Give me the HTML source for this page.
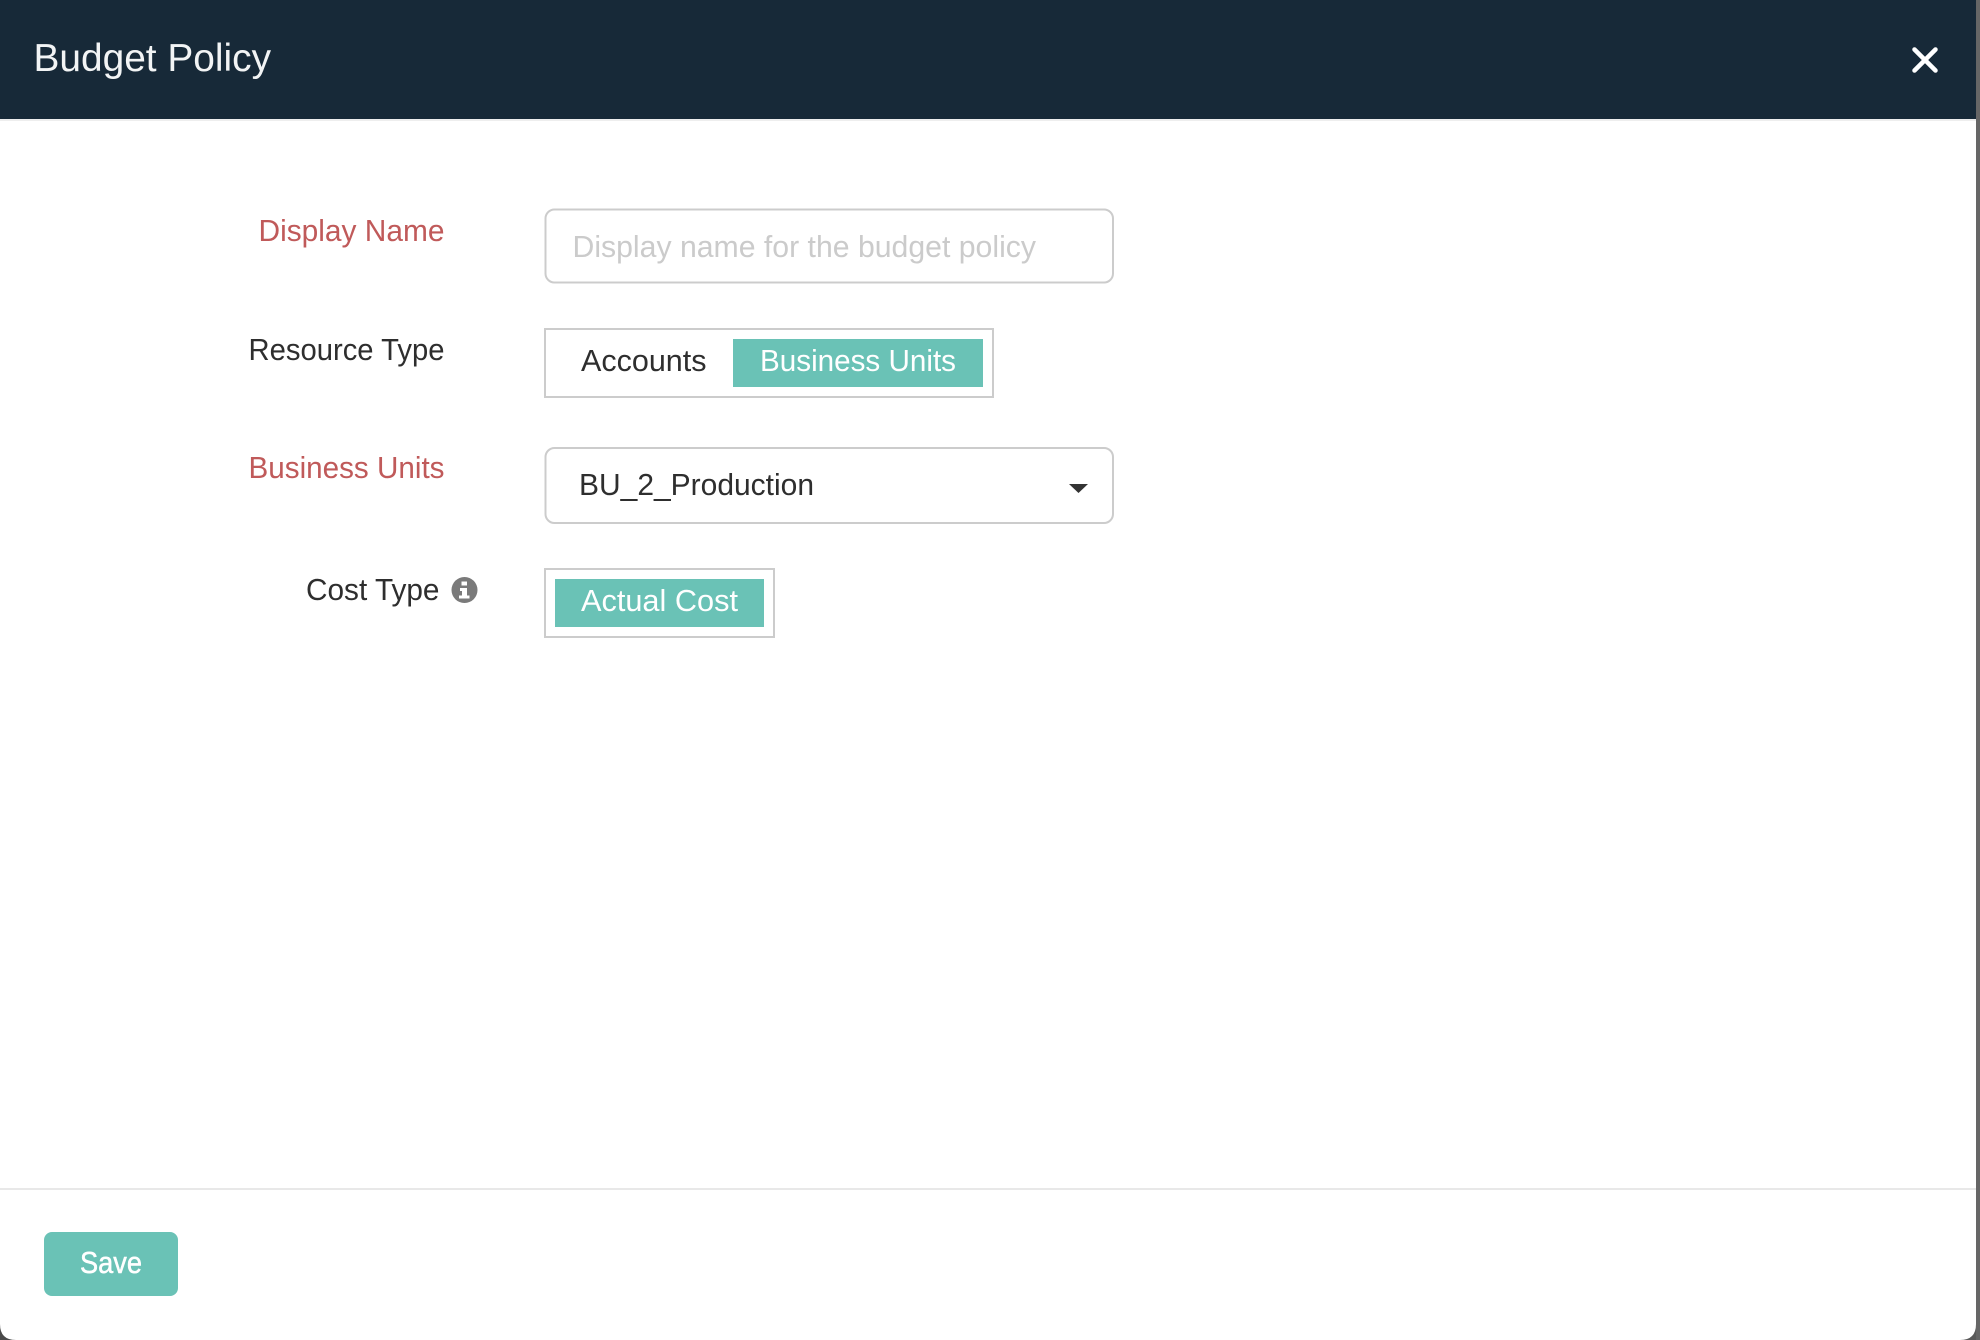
<!DOCTYPE html>
<html lang="en"><head><meta charset="utf-8"><title>Budget Policy</title>
<style>
html,body{margin:0;padding:0;background:#fff}
body{width:1980px;height:1340px;overflow:hidden;position:relative}
svg{position:absolute;left:0;top:0}
text{font-family:"Liberation Sans",sans-serif}
</style></head><body>
<svg width="1980" height="1340" viewBox="0 0 1980 1340" xmlns="http://www.w3.org/2000/svg">
<rect width="1980" height="1340" fill="#5a5a5a"/>
<rect x="0" y="0" width="1976" height="1340" fill="#fff"/>
<path d="M0 1324V1340H16Q0 1340 0 1324Z" fill="#4a4a4a"/>
<path d="M1976 1324V1340H1960Q1976 1340 1976 1324Z" fill="#5a5a5a"/>
<rect x="1976" y="0" width="4" height="1340" fill="#666"/>
<rect x="0" y="0" width="1976" height="119" fill="#172938"/>
<rect x="0" y="119" width="1976" height="2" fill="#eeeeee"/>
<text x="33.500" y="71" font-size="39" fill="#f2f4f5" textLength="237.500" lengthAdjust="spacingAndGlyphs">Budget Policy</text>
<path d="M1914.500 49.500L1935.500 70.500M1935.500 49.500L1914.500 70.500" stroke="#fff" stroke-width="4.500" stroke-linecap="round" fill="none"/>

<text x="258.500" y="241" font-size="31" fill="#c05a5a" textLength="186" lengthAdjust="spacingAndGlyphs">Display Name</text>
<rect x="545.500" y="209.500" width="567.500" height="73" rx="9" fill="#fff" stroke="#cccccc" stroke-width="2"/>
<text x="572.500" y="257" font-size="31" fill="#cbcbcb" textLength="463.500" lengthAdjust="spacingAndGlyphs">Display name for the budget policy</text>

<text x="248.500" y="360" font-size="31" fill="#2e2e2e" textLength="196" lengthAdjust="spacingAndGlyphs">Resource Type</text>
<rect x="545" y="329" width="448" height="68" fill="#fff" stroke="#cccccc" stroke-width="2"/>
<text x="581" y="371" font-size="31" fill="#2e2e2e" textLength="125.500" lengthAdjust="spacingAndGlyphs">Accounts</text>
<rect x="733" y="339" width="250" height="48" fill="#6ac2b6"/>
<text x="760" y="371" font-size="31" fill="#fff" textLength="196" lengthAdjust="spacingAndGlyphs">Business Units</text>

<text x="248.500" y="478" font-size="31" fill="#c05a5a" textLength="196" lengthAdjust="spacingAndGlyphs">Business Units</text>
<rect x="545.500" y="448" width="567.500" height="75" rx="9" fill="#fff" stroke="#cccccc" stroke-width="2"/>
<text x="579" y="495" font-size="31" fill="#2e2e2e" textLength="235" lengthAdjust="spacingAndGlyphs">BU_2_Production</text>
<path d="M1069 484H1088L1078.500 493Z" fill="#333"/>

<text x="306" y="600" font-size="31" fill="#2e2e2e" textLength="133.500" lengthAdjust="spacingAndGlyphs">Cost Type</text>
<circle cx="464.500" cy="590" r="13" fill="#7a7a7a"/>
<path d="M461.500 581.500h5.500v4h-5.500zM460 588h7v7.500h2.500v3h-10.500v-3h3v-4.500h-2z" fill="#fff"/>
<rect x="545" y="569" width="229" height="68" fill="#fff" stroke="#cccccc" stroke-width="2"/>
<rect x="555" y="579" width="209" height="48" fill="#6ac2b6"/>
<text x="581" y="611" font-size="31" fill="#fff" textLength="157" lengthAdjust="spacingAndGlyphs">Actual Cost</text>

<rect x="0" y="1188" width="1976" height="2" fill="#e8e8e8"/>
<rect x="44" y="1232" width="134" height="64" rx="8" fill="#6ac2b6"/>
<text x="80" y="1273" font-size="31" fill="#fff" stroke="#fff" stroke-width="0.500" textLength="62" lengthAdjust="spacingAndGlyphs">Save</text>
</svg>
</body></html>
